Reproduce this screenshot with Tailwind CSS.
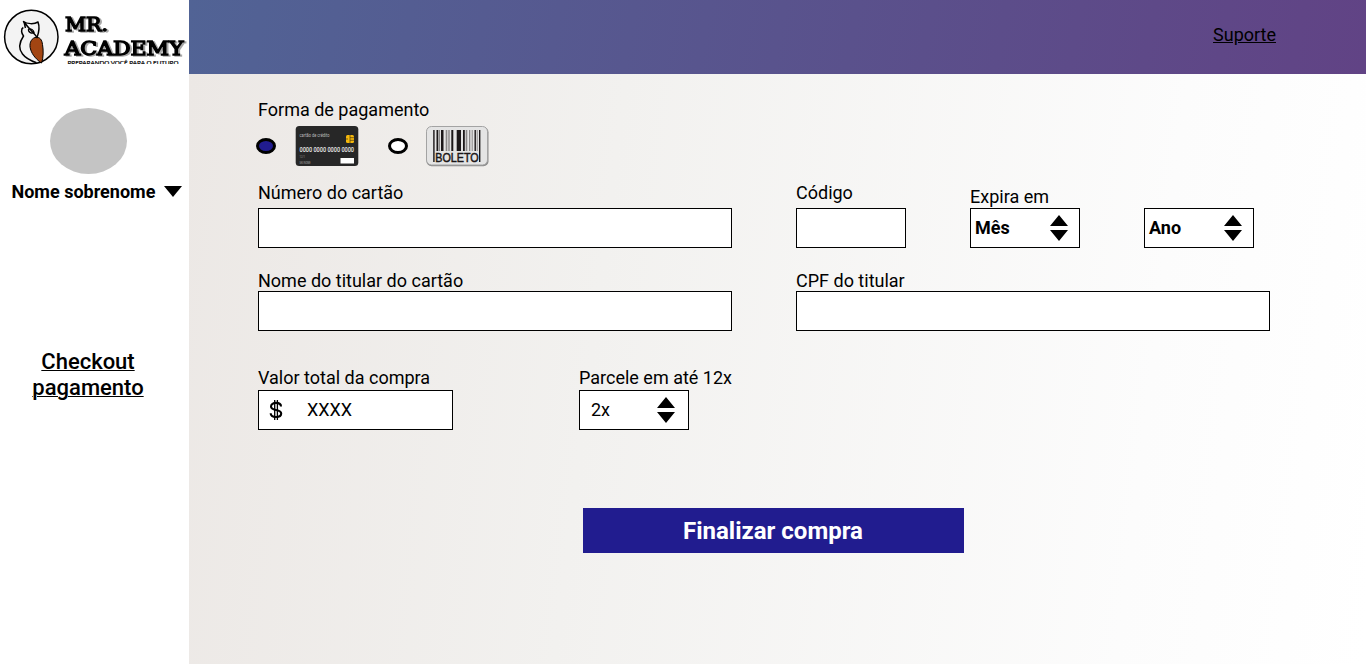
<!DOCTYPE html>
<html lang="pt-BR">
<head>
<meta charset="utf-8">
<title>Checkout pagamento</title>
<script src="https://cdn.jsdelivr.net/npm/@tailwindcss/browser@4"></script>
</head>
<body class="flex h-[664px] w-[1366px] overflow-hidden bg-white font-['Roboto',sans-serif] text-[18px] leading-[21px] text-black">
  <aside class="flex w-[189px] shrink-0 flex-col bg-white">
    <svg class="block h-[74px] w-[189px]" viewBox="0 0 189 74">
      <circle cx="31.3" cy="37" r="26.7" fill="#f3f3f3" stroke="#000" stroke-width="1.5"/>
      <path d="M35 37.500C30.500 39 29 44.500 30.500 49C32 55 37 60 41.500 63C43.500 58 43.500 50 42.500 44.500C42 40 40 36.500 35 37.500Z" fill="#a24512" stroke="#000" stroke-width="1"/>
      <path d="M23.300 27.500C20.500 29 21.500 33.500 23.500 36C19.500 42 18.500 49 22.500 54C25.500 58 30 60.500 36.500 62.800" fill="none" stroke="#000" stroke-width="1.500"/>
      <path d="M25.500 28C24.500 25.500 25 23.500 23.500 21.500C27 24 34 24.500 38 22C39.500 26 39.500 31 37 37.500C34.500 33.500 29 29 24.500 22.500" fill="none" stroke="#000" stroke-width="1.500" stroke-linejoin="round"/>
      <path d="M28.500 29C28 32.500 32 34 34 32.500C33.500 30 31 28.500 28.500 29" fill="none" stroke="#000" stroke-width="1.300"/>
      <g class="drop-shadow-[2px_1.5px_0_#a8a8a8]" font-family="DejaVu Serif, serif" font-size="18.500" stroke="#000" stroke-width="1.300">
        <text x="65" y="31" textLength="43" lengthAdjust="spacingAndGlyphs">MR.</text>
        <text x="64.500" y="55" textLength="119" lengthAdjust="spacingAndGlyphs">ACADEMY</text>
      </g>
      <svg x="64" y="58.500" width="122" height="5.500" viewBox="64 58.500 122 5.500">
        <text x="67.500" y="64.700" font-family="Lato, sans-serif" font-size="6" textLength="111" lengthAdjust="spacingAndGlyphs" stroke="#000" stroke-width=".2">PREPARANDO VOCÊ PARA O FUTURO</text>
      </svg>
    </svg>
    <div class="mt-[34px] ml-[50px] h-[66px] w-[77px] rounded-[50%] bg-[#c4c4c4]"></div>
    <div class="mt-[7px] flex items-center pl-[11.500px] font-bold">
      <span class="w-[152.500px] whitespace-nowrap">Nome sobrenome</span>
      <svg class="h-[11px] w-[18px]" viewBox="0 0 18 11"><path d="M0 0H18L9 11Z"/></svg>
    </div>
    <a class="mt-[147px] w-[176px] text-center text-[22px] leading-[26px] font-medium underline decoration-1">Checkout<br>pagamento</a>
  </aside>

  <div class="flex grow flex-col">
    <header class="flex h-[74px] justify-end bg-linear-[100deg,#516395,#614385] pt-6 pr-[90px]">
      <a class="underline">Suporte</a>
    </header>

    <main class="grow bg-linear-[97deg,#ece8e5,#f2f1ef_35%,#fcfcfc_80%,#ffffff] pt-[25px] pl-[69px]">
      <p>Forma de pagamento</p>
      <div class="mt-[6px] -ml-[2px] flex h-[40px] items-center">
        <svg class="h-4 w-5" viewBox="0 0 20 16"><ellipse cx="10" cy="8" rx="8.500" ry="6.500" fill="#211c8f" stroke="#000" stroke-width="3"/></svg>
        <svg class="ml-[19px] h-[42px] w-[64px]" viewBox="0 0 64 42">
          <rect x="0.700" y="1" width="62.600" height="40" rx="3.500" fill="#272727"/>
          <text x="4.500" y="12" font-family="Roboto, sans-serif" font-size="4.800" fill="#bbb" textLength="30" lengthAdjust="spacingAndGlyphs">cartão de crédito</text>
          <rect x="51" y="10" width="8" height="8" rx="1.500" fill="#f6b80c"/>
          <path d="M55 10V18M55 12.700H59M55 15.300H59M51 14H53" stroke="#473710" stroke-width=".7"/>
          <text x="4.500" y="27.200" font-family="Roboto, sans-serif" font-size="6.500" font-weight="500" fill="#e8e8e8" textLength="54.500" lengthAdjust="spacingAndGlyphs">0000 0000 0000 0000</text>
          <text x="4.500" y="32.800" font-family="Roboto, sans-serif" font-size="2.600" fill="#999">12/1</text>
          <text x="4.500" y="38.800" font-family="Roboto, sans-serif" font-size="3" fill="#aaa" textLength="11" lengthAdjust="spacingAndGlyphs">SEU NOME</text>
          <rect x="45.500" y="33" width="13.500" height="5.500" fill="#fff"/>
        </svg>
        <svg class="ml-[29px] h-4 w-5" viewBox="0 0 20 16"><ellipse cx="10" cy="8" rx="8.500" ry="6.500" fill="#fff" stroke="#000" stroke-width="3"/></svg>
        <svg class="ml-[17px] h-[42px] w-[64px]" viewBox="0 0 64 42">
          <rect x="1.500" y="2.200" width="62" height="39" rx="5" fill="#8b8b8b"/>
          <rect x="1.500" y="1.500" width="61" height="38.500" rx="5" fill="#e4e4e4" stroke="#a3a3a3"/>
          <g fill="#1b1718">
            <rect x="8.200" y="5" width="1.400" height="32"/>
            <rect x="11.500" y="5" width="1.800" height="21"/>
            <rect x="16" y="5" width="2.500" height="21"/>
            <rect x="26.300" y="5" width="2" height="21"/>
            <rect x="31.700" y="5" width="4.300" height="21"/>
            <rect x="38" y="5" width="1.800" height="21"/>
            <rect x="49.500" y="5" width="1.400" height="21"/>
            <rect x="54" y="5" width="1.400" height="32"/>
          </g>
          <g fill="#8a8888">
            <rect x="14" y="5" width="1" height="21"/>
            <rect x="20.700" y="5" width="1.600" height="21"/>
            <rect x="23.300" y="5" width="1.400" height="21"/>
            <rect x="40.700" y="5" width="1.600" height="21"/>
            <rect x="44" y="5" width="1.300" height="21"/>
            <rect x="46.700" y="5" width="1" height="21"/>
            <rect x="51.700" y="5" width="1" height="21"/>
          </g>
          <text x="10.300" y="36.500" font-family="Liberation Sans, sans-serif" font-size="12" fill="#1b1718" stroke="#1b1718" stroke-width=".5" textLength="43.400" lengthAdjust="spacingAndGlyphs">BOLETO</text>
        </svg>
      </div>

      <div class="mt-4 flex h-[66px] gap-16">
        <div class="flex w-[474px] flex-col justify-between"><label>Número do cartão</label><div class="h-10 border border-black bg-white"></div></div>
        <div class="flex w-[110px] flex-col justify-between"><label>Código</label><div class="h-10 border border-black bg-white"></div></div>
        <div class="flex w-[110px] flex-col justify-end">
          <label class="mb-px">Expira em</label>
          <div class="flex h-10 items-center justify-between border border-black bg-white pr-[11px] pl-1 font-bold">
            <span class="mb-px">Mês</span>
            <svg class="h-[26px] w-[18px]" viewBox="0 0 18 26"><path d="M0 11L9 0L18 11ZM0 15H18L9 26Z"/></svg>
          </div>
        </div>
        <div class="flex w-[110px] flex-col justify-end">
          <div class="flex h-10 items-center justify-between border border-black bg-white pr-[11px] pl-1 font-bold">
            <span class="mb-px">Ano</span>
            <svg class="h-[26px] w-[18px]" viewBox="0 0 18 26"><path d="M0 11L9 0L18 11ZM0 15H18L9 26Z"/></svg>
          </div>
        </div>
      </div>

      <div class="mt-[22px] flex gap-16">
        <div class="flex w-[474px] flex-col"><label>Nome do titular do cartão</label><div class="h-10 border border-black bg-white"></div></div>
        <div class="flex w-[474px] flex-col"><label>CPF do titular</label><div class="h-10 border border-black bg-white"></div></div>
      </div>

      <div class="mt-9 flex gap-[126px]">
        <div class="flex w-[195px] flex-col gap-[2px]">
          <label>Valor total da compra</label>
          <div class="flex h-10 items-center border border-black bg-white pl-[10px]">
            <svg class="h-5 w-[14px]" viewBox="0 0 14 20" fill="none" stroke="#000"><path d="M12 6.500C12 4 9.700 2.900 7 2.900S2 4.200 2 6.500C2 8.800 4.300 9.500 7 10S12.200 11.200 12.200 13.500S9.800 17 7 17S1.700 15.800 1.700 13.300" stroke-width="2.100"/><path d="M5.700 0V20M8.400 0V20" stroke-width="1.300"/></svg>
            <span class="mb-px ml-[24px]">XXXX</span>
          </div>
        </div>
        <div class="flex w-[110px] flex-col gap-[2px]">
          <label class="whitespace-nowrap">Parcele em até 12x</label>
          <div class="flex h-10 items-center justify-between border border-black bg-white pr-[13px] pl-[11px]">
            <span class="mb-px">2x</span>
            <svg class="h-[26px] w-[18px]" viewBox="0 0 18 26"><path d="M0 11L9 0L18 11ZM0 15H18L9 26Z"/></svg>
          </div>
        </div>
      </div>

      <button class="mt-[78px] ml-[325px] block h-[45px] w-[381px] bg-[#211c8f] pr-px text-[24px] leading-[28px] font-bold text-white">Finalizar compra</button>
    </main>
  </div>
</body>
</html>
